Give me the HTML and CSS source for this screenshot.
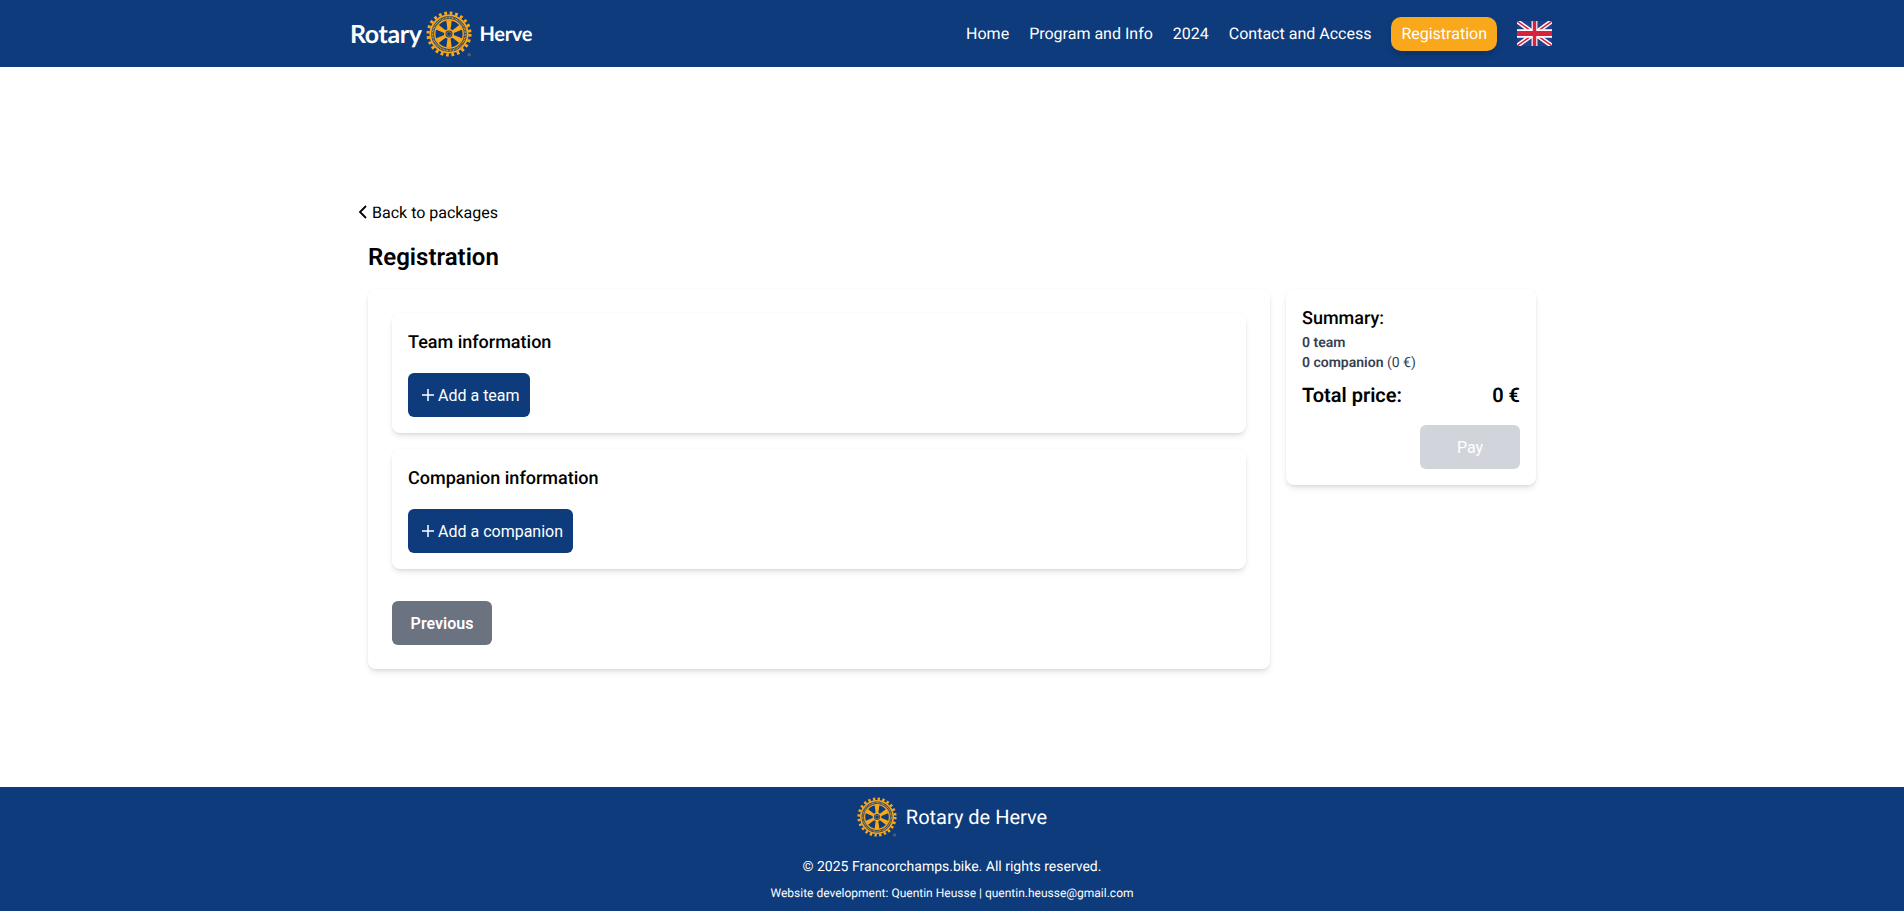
FILE: index.html
```html
<!DOCTYPE html>
<html lang="en">
<head>
  <meta charset="UTF-8" />
  <meta name="viewport" content="width=device-width, initial-scale=1.0"/>
  <title>Registration - Rotary de Herve</title>
  <link rel="stylesheet" href="styles.css">
</head>
<body>

  <svg class="defs" width="0" height="0" aria-hidden="true">
    <symbol id="wheel" viewBox="0 0 100 100">
      <circle cx="50" cy="50" r="45.5" fill="none" stroke="#f9a81b" stroke-width="7" stroke-dasharray="5.96 5.96"/>
      <circle cx="50" cy="50" r="40.5" fill="none" stroke="#f9a81b" stroke-width="4"/>
      <circle cx="50" cy="50" r="35.5" fill="none" stroke="#f9a81b" stroke-width="3.6" stroke-dasharray="1.8 1.4"/>
      <circle cx="50" cy="50" r="31" fill="none" stroke="#f9a81b" stroke-width="3"/>
      <g fill="#f9a81b">
        <path id="spoke" d="M48 50 L44 20 L56 20 L52 50 Z"/>
        <use href="#spoke" transform="rotate(60 50 50)"/>
        <use href="#spoke" transform="rotate(120 50 50)"/>
        <use href="#spoke" transform="rotate(180 50 50)"/>
        <use href="#spoke" transform="rotate(240 50 50)"/>
        <use href="#spoke" transform="rotate(300 50 50)"/>
      </g>
      <circle cx="50" cy="50" r="11" fill="#f9a81b"/>
      <circle cx="50" cy="50" r="7.5" fill="#0d3b7c"/>
      <circle cx="50" cy="50" r="5" fill="none" stroke="#f9a81b" stroke-width="1.2"/>
      <circle cx="94" cy="95" r="2.6" fill="none" stroke="#f9a81b" stroke-width="1"/>
    </symbol>
  </svg>

  <header class="site-header">
    <div class="header-inner">
      <a class="logo" href="#">
        <span class="logo-rotary">Rotary</span>
        <svg class="logo-wheel"><use href="#wheel"/></svg>
        <span class="logo-herve">Herve</span>
      </a>
      <nav class="nav">
        <a href="#">Home</a>
        <a href="#">Program and Info</a>
        <a href="#">2024</a>
        <a href="#">Contact and Access</a>
        <a class="nav-cta" href="#">Registration</a>
        <svg class="flag" viewBox="0 0 60 30" preserveAspectRatio="none">
          <rect width="60" height="30" fill="#1f3f8f"/>
          <path d="M0 0 L60 30 M60 0 L0 30" stroke="#fff" stroke-width="6"/>
          <path d="M0 0 L60 30 M60 0 L0 30" stroke="#d8213a" stroke-width="2"/>
          <path d="M30 0 V30 M0 15 H60" stroke="#fff" stroke-width="10"/>
          <path d="M30 0 V30 M0 15 H60" stroke="#d8213a" stroke-width="6"/>
        </svg>
      </nav>
    </div>
  </header>

  <main class="page">
    <a class="back-link" href="#">
      <svg viewBox="0 0 10 14" width="10" height="14"><path d="M8 1 L2 7 L8 13" fill="none" stroke="#000" stroke-width="1.8"/></svg>
      Back to packages
    </a>

    <div class="content">
      <h1>Registration</h1>

      <div class="columns">
        <section class="card form-card">
          <div class="card sub-card">
            <h2>Team information</h2>
            <button class="btn-add">
              <svg viewBox="0 0 16 16" width="16" height="16"><path d="M8 2 V14 M2 8 H14" stroke="#fff" stroke-width="1.5"/></svg>
              Add a team
            </button>
          </div>

          <div class="card sub-card">
            <h2>Companion information</h2>
            <button class="btn-add">
              <svg viewBox="0 0 16 16" width="16" height="16"><path d="M8 2 V14 M2 8 H14" stroke="#fff" stroke-width="1.5"/></svg>
              Add a companion
            </button>
          </div>

          <button class="btn-previous">Previous</button>
        </section>

        <aside class="card summary">
          <h2>Summary:</h2>
          <p class="summary-line"><strong>0 team</strong></p>
          <p class="summary-line"><strong>0 companion</strong> (0 €)</p>
          <div class="total">
            <span>Total price:</span>
            <span>0 €</span>
          </div>
          <div class="pay-row">
            <button class="btn-pay" disabled>Pay</button>
          </div>
        </aside>
      </div>
    </div>
  </main>

  <footer class="site-footer">
    <div class="footer-brand">
      <svg class="footer-wheel"><use href="#wheel"/></svg>
      <span>Rotary de Herve</span>
    </div>
    <p class="copyright">© 2025 Francorchamps.bike. All rights reserved.</p>
    <p class="credits">Website development: Quentin Heusse | quentin.heusse@gmail.com</p>
  </footer>

</body>
</html>
```

FILE: styles.css
```css
* {
  box-sizing: border-box;
}

body {
  display: flex;
  flex-direction: column;
  min-height: 911px;
  margin: 0;
  font-family: Roboto, Arial, sans-serif;
  color: #000;
  background: #fff;
  text-rendering: geometricPrecision;
}

a {
  color: inherit;
  text-decoration: none;
}

button {
  font-family: inherit;
  border: 0;
  cursor: pointer;
}

.defs {
  position: absolute;
}

/* header */
.site-header {
  height: 67px;
  background-color: #0d3b7c;
  color: #fff;
}

.header-inner {
  display: flex;
  align-items: center;
  justify-content: space-between;
  max-width: 1216px;
  height: 100%;
  margin: auto;
  padding: 0 8px;
}

.logo {
  display: flex;
  align-items: center;
  margin-left: -2px;
}

.logo-rotary {
  font-family: Lato, sans-serif;
  font-size: 25px;
  font-weight: 700;
  letter-spacing: -0.4px;
}

.logo-wheel {
  width: 46px;
  height: 46px;
  margin: 0 7px 0 5px;
}

.logo-herve {
  font-family: Lato, sans-serif;
  font-size: 20px;
  font-weight: 700;
  letter-spacing: -0.3px;
}

.nav {
  display: flex;
  align-items: center;
  gap: 20px;
  font-size: 16px;
}

.nav-cta {
  display: flex;
  align-items: center;
  height: 34px;
  padding: 0 10px;
  border-radius: 10px;
  background-color: #f9a81b;
  box-shadow: 0 4px 6px -1px rgba(0, 0, 0, 0.2);
}

.flag {
  width: 35px;
  height: 25px;
}

/* main area */
.page {
  flex: 1;
  width: 1188px;
  margin: 0 auto;
  padding-top: 133px;
}

.back-link {
  display: flex;
  align-items: center;
  gap: 4px;
  height: 24px;
  font-size: 16px;
}

.content {
  margin-top: 17px;
  padding-left: 10px;
  padding-right: 10px;
}

h1 {
  margin: 0 0 16px;
  font-size: 24px;
  line-height: 32px;
  font-weight: 600;
}

h2 {
  margin: 0;
  font-size: 18px;
  line-height: 28px;
  font-weight: 500;
}

.columns {
  display: grid;
  grid-template-columns: 1fr 250px;
  gap: 16px;
  align-items: start;
}

.card {
  border-radius: 8px;
  background: #fff;
  box-shadow: 0 0 3px rgba(0, 0, 0, 0.03), 0 4px 6px -1px rgba(0, 0, 0, 0.1), 0 2px 4px -2px rgba(0, 0, 0, 0.1);
}

.form-card {
  display: flex;
  flex-direction: column;
  align-items: flex-start;
  gap: 16px;
  padding: 24px;
}

.sub-card {
  align-self: stretch;
  padding: 16px;
}

.btn-add {
  display: flex;
  align-items: center;
  gap: 2px;
  height: 44px;
  margin-top: 16px;
  padding: 0 10px 0 12px;
  border-radius: 6px;
  font-size: 16px;
  color: #fff;
  background-color: #0d3b7c;
}

.btn-previous {
  width: 100px;
  height: 44px;
  margin-top: 16px;
  border-radius: 6px;
  font-size: 16px;
  font-weight: 600;
  color: #fff;
  background-color: #6b7280;
}

/* summary */
.summary {
  padding: 16px;
}

.summary-line {
  margin: 0;
  font-size: 14px;
  line-height: 20px;
  color: #374151;
}

.summary-line strong {
  font-weight: 600;
}

.total {
  display: flex;
  justify-content: space-between;
  margin-top: 8px;
  font-size: 20px;
  line-height: 28px;
  font-weight: 600;
}

.pay-row {
  display: flex;
  justify-content: flex-end;
  margin-top: 16px;
}

.btn-pay {
  width: 100px;
  height: 44px;
  border-radius: 6px;
  font-size: 16px;
  color: #fff;
  background-color: #d1d5db;
  cursor: default;
}

/* footer */
.site-footer {
  padding: 10px 0;
  text-align: center;
  color: #fff;
  background-color: #0d3b7c;
}

.footer-brand {
  display: flex;
  align-items: center;
  justify-content: center;
  gap: 9px;
  font-size: 20px;
}

.footer-wheel {
  width: 40px;
  height: 40px;
}

.copyright {
  margin: 20px 0 8px;
  font-size: 14px;
  line-height: 20px;
}

.credits {
  margin: 0;
  font-size: 12px;
  line-height: 16px;
}
```
